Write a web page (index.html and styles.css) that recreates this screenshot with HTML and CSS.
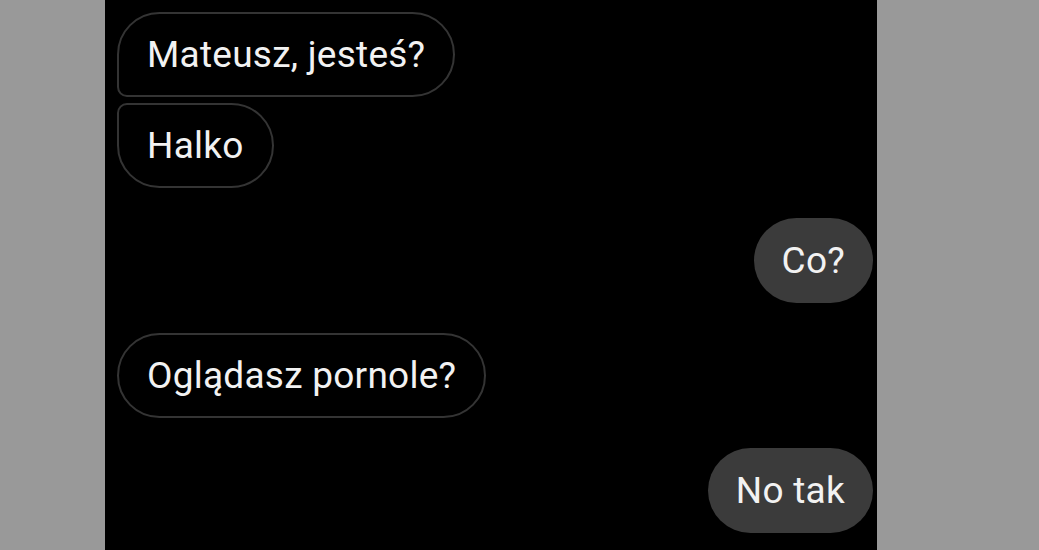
FILE: index.html
```html
<!DOCTYPE html>
<html lang="pl">
<head>
<meta charset="utf-8">
<link rel="stylesheet" href="styles.css">
</head>
<body>
<div class="panel">
  <div class="bubble in first">Mateusz, jesteś?</div>
  <div class="bubble in last">Halko</div>
  <div class="bubble out gap">Co?</div>
  <div class="bubble in gap">Oglądasz pornole?</div>
  <div class="bubble out gap">No tak</div>
</div>
</body>
</html>
```

FILE: styles.css
```css
html, body {
  margin: 0;
  padding: 0;
  background: #999999;
  height: 550px;
  overflow: hidden;
}
.panel {
  width: 772px;
  height: 550px;
  margin-left: 105px;
  background: #000;
  box-sizing: border-box;
  padding: 12px 4px 0 12px;
  display: flex;
  flex-direction: column;
  gap: 6px;
  font-family: Roboto, "Noto Sans", sans-serif;
}
.bubble {
  height: 85px;
  box-sizing: border-box;
  display: flex;
  align-items: center;
  padding: 0 28px;
  font-size: 37px;
  letter-spacing: 0.25px;
  color: #f2f2f2;
  border-radius: 43px;
  white-space: nowrap;
}
.in {
  align-self: flex-start;
  border: 2px solid #343434;
}
.out {
  align-self: flex-end;
  background: #3b3b3b;
}
.first {
  border-bottom-left-radius: 10px;
}
.last {
  border-top-left-radius: 10px;
}
.gap {
  margin-top: 24px;
}
```
